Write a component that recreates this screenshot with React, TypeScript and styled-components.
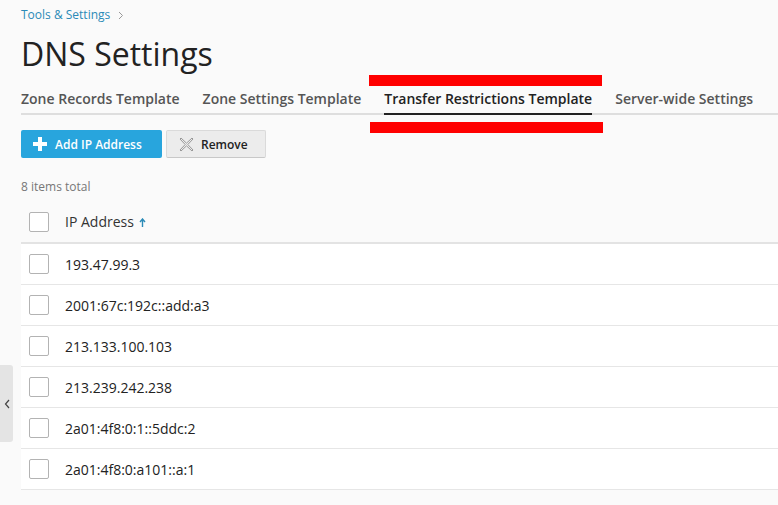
import React from "react";
import styled, { createGlobalStyle } from "styled-components";

const GlobalStyle = createGlobalStyle`
  html, body {
    margin: 0;
    padding: 0;
    background: #fafafa;
    font-family: "Open Sans", "Liberation Sans", sans-serif;
    color: #222;
    overflow: hidden;
  }
`;

const ips = [
  "193.47.99.3",
  "2001:67c:192c::add:a3",
  "213.133.100.103",
  "213.239.242.238",
  "2a01:4f8:0:1::5ddc:2",
  "2a01:4f8:0:a101::a:1",
];

const tabs = [
  { label: "Zone Records Template", active: false },
  { label: "Zone Settings Template", active: false },
  { label: "Transfer Restrictions Template", active: true },
  { label: "Server-wide Settings", active: false },
];

const App: React.FC = () => {
  return (
    <Page>
      <GlobalStyle />
      <Breadcrumbs>
        <a>Tools &amp; Settings</a>
        <svg width="6" height="9" viewBox="0 0 6 9">
          <path d="M1 1l3.5 3.5L1 8" fill="none" stroke="#999" strokeWidth="1" />
        </svg>
      </Breadcrumbs>
      <Title>DNS Settings</Title>
      <Tabs>
        {tabs.map((t) => (
          <Tab key={t.label} $active={t.active}>
            {t.label}
          </Tab>
        ))}
      </Tabs>
      <Toolbar>
        <PrimaryButton>
          <svg width="14" height="14" viewBox="0 0 14 14">
            <path d="M5 0h4v5h5v4H9v5H5V9H0V5h5z" fill="#fff" />
          </svg>
          Add IP Address
        </PrimaryButton>
        <Button>
          <svg width="15" height="15" viewBox="0 0 15 15">
            <path
              d="M2 1L7.5 6.2 13 1 14 2 8.8 7.5 14 13 13 14 7.5 8.8 2 14 1 13 6.2 7.5 1 2z"
              fill="none"
              stroke="#999"
              strokeWidth="1"
              strokeLinejoin="round"
            />
          </svg>
          Remove
        </Button>
      </Toolbar>
      <Total>8 items total</Total>
      <Table>
        <HeaderRow>
          <Check />
          <HeadLabel>
            IP Address
            <svg width="7" height="9" viewBox="0 0 7 9">
              <path d="M3.5 9V1.5M1 4l2.5-3L6 4" fill="none" stroke="#2a8ab7" strokeWidth="1.4" />
            </svg>
          </HeadLabel>
        </HeaderRow>
        {ips.map((ip) => (
          <Row key={ip}>
            <Check />
            <Cell>{ip}</Cell>
          </Row>
        ))}
      </Table>
      <SideToggle>
        <svg width="6" height="10" viewBox="0 0 6 10">
          <path d="M5 1L1.5 5 5 9" fill="none" stroke="#444" strokeWidth="1.2" />
        </svg>
      </SideToggle>
      <Mark $top={75} $left={369} />
      <Mark $top={122} $left={370} />
    </Page>
  );
};

const Page = styled.div`
  position: relative;
  width: 778px;
  height: 505px;
  box-sizing: border-box;
  padding: 6px 0 0 21px;
`;

const Breadcrumbs = styled.div`
  display: flex;
  align-items: center;
  gap: 8px;
  font-size: 12px;
  line-height: 18px;

  a {
    color: #2a8ab7;
  }
`;

const Title = styled.h1`
  margin: 8px 0 0;
  font-size: 32px;
  font-weight: 400;
  line-height: 44px;
  color: #222;
`;

const Tabs = styled.div`
  display: flex;
  gap: 23px;
  margin-top: 13px;
  border-bottom: 2px solid #dedede;
`;

const Tab = styled.div<{ $active: boolean }>`
  font-size: 14px;
  font-weight: 600;
  line-height: 20px;
  padding-bottom: 4px;
  margin-bottom: -2px;
  color: ${(p) => (p.$active ? "#222" : "#555")};
  border-bottom: 2px solid ${(p) => (p.$active ? "#222" : "transparent")};
  white-space: nowrap;
`;

const Toolbar = styled.div`
  display: flex;
  gap: 4px;
  margin-top: 15px;
`;

const PrimaryButton = styled.button`
  display: flex;
  align-items: center;
  gap: 8px;
  height: 28px;
  width: 141px;
  padding: 0 12px;
  border: none;
  border-radius: 2px;
  background: #28a5dd;
  color: #fff;
  font-family: inherit;
  font-size: 12px;
  font-weight: 600;
`;

const Button = styled.button`
  display: flex;
  align-items: center;
  gap: 7px;
  height: 28px;
  width: 100px;
  padding: 0 12px;
  border: 1px solid #dadada;
  border-bottom-color: #c8c8c8;
  border-radius: 2px;
  background: #ececec;
  color: #222;
  font-family: inherit;
  font-size: 12px;
  font-weight: 600;
`;

const Total = styled.div`
  margin-top: 20px;
  font-size: 12px;
  line-height: 18px;
  color: #777;
`;

const Table = styled.div`
  margin-top: 5px;
  display: flex;
  flex-direction: column;
`;

const HeaderRow = styled.div`
  display: flex;
  align-items: center;
  gap: 16px;
  height: 41px;
  padding-left: 8px;
  border-bottom: 2px solid #e3e3e3;
`;

const Row = styled.div`
  display: flex;
  align-items: center;
  gap: 16px;
  height: 40px;
  padding-left: 8px;
  background: #fff;
  border-bottom: 1px solid #e6e6e6;
`;

const Check = styled.span`
  width: 18px;
  height: 18px;
  border: 1px solid #b3b3b3;
  border-radius: 2px;
  background: #fff;
  flex: none;
`;

const HeadLabel = styled.div`
  display: flex;
  align-items: center;
  gap: 5px;
  font-size: 14px;
  color: #333;

  svg {
    margin-top: 2px;
  }
`;

const Cell = styled.div`
  font-size: 14px;
  color: #222;
`;

const SideToggle = styled.div`
  position: absolute;
  left: 0;
  top: 365px;
  width: 13px;
  height: 77px;
  background: #e4e4e4;
  border-radius: 0 3px 3px 0;
  display: flex;
  align-items: center;
  justify-content: center;
`;

const Mark = styled.div<{ $top: number; $left: number }>`
  position: absolute;
  top: ${(p) => p.$top}px;
  left: ${(p) => p.$left}px;
  width: 233px;
  height: 11px;
  background: #ff0000;
`;

export default App;
